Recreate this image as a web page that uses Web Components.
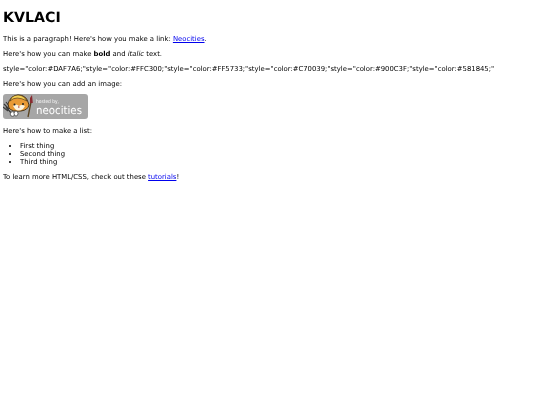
<!DOCTYPE html>
<html><head><meta charset="utf-8"><title>KVLACI</title>
<style>html,body{margin:0;padding:0;background:#fff}</style></head>
<body>
<template id="t-page"><style>
:host{display:block;padding:3px;font:6.87px/9px "DejaVu Sans",sans-serif;color:#000;text-rendering:geometricPrecision;filter:blur(.25px)}
h1{font-size:14.2px;line-height:18px;margin:6px 0 7.5px;font-weight:700}
</style><h1><slot name="title"></slot></h1><slot></slot></template>
<template id="t-p"><style>:host{display:block;margin:6px 0}</style><slot></slot></template>
<template id="t-badge"><style>:host{display:block;width:85px;height:25px;margin:-.5px 0 7.5px}svg{display:block}
text{font-family:"DejaVu Sans",sans-serif;fill:#fff}</style>
<svg width="85" height="25" viewBox="0 0 85 25">
<rect width="85" height="25" rx="3" fill="#a6a6a6"/>
<path d="M1 10 L6 15 M3 8 L7 13 M0 13 L5 17 M3 13 L9 20" stroke="#3a3a3a" stroke-width="1.200" fill="none"/>
<circle cx="9.500" cy="20" r="2.300" fill="#fff" stroke="#333" stroke-width=".7"/>
<path d="M5 10 Q7 2 15 1 Q23 1 25 8 L26 11 Q25 16 18 17 Q9 18 6 14Z" fill="#e89a35" stroke="#3d2a12" stroke-width=".9"/>
<path d="M7 7 Q13 1 24 7 L21 3 Q15 -1 9 3Z" fill="#f3cf55" stroke="#3d2a12" stroke-width=".6"/>
<path d="M10 12 Q13 9 16 12 Q19 10 22 12 L20 15 Q15 18 12 15Z" fill="#fbf4e0"/>
<circle cx="11.500" cy="10.500" r="1" fill="#222"/><circle cx="20" cy="10" r="1" fill="#222"/><circle cx="15.800" cy="13" r=".8" fill="#a33"/>
<ellipse cx="13" cy="19.500" rx="2" ry="2.500" fill="#fff" stroke="#333" stroke-width=".7"/>
<path d="M25 23 L28 8" stroke="#5a4320" stroke-width="1.300"/><path d="M27 9 L27 4 L29 1 L29.800 9Z" fill="#8a2a30"/>
<text x="33" y="8.500" font-size="5" textLength="23" lengthAdjust="spacingAndGlyphs">hosted by,</text>
<text x="33" y="20" font-size="11" textLength="46" lengthAdjust="spacingAndGlyphs">neocities</text></svg></template>
<template id="t-list"><style>:host{display:block;margin:6.4px 0 7.2px;padding-left:17px}ul{margin:0;padding:0}</style><ul><slot></slot></ul></template>
<template id="t-item"><style>:host{display:list-item;list-style:disc;height:8px;line-height:8px}</style><slot></slot></template>
<style>a{color:#00e}</style>
<kv-page>
<span slot="title">KVLACI</span>
<kv-p>This is a paragraph! Here's how you make a link: <a href="#">Neocities</a>.</kv-p>
<kv-p>Here's how you can make <b>bold</b> and <i>italic</i> text.</kv-p>
<kv-p>style="color:#DAF7A6;"style="color:#FFC300;"style="color:#FF5733;"style="color:#C70039;"style="color:#900C3F;"style="color:#581845;"</kv-p>
<kv-p>Here's how you can add an image:</kv-p>
<kv-badge></kv-badge>
<kv-p>Here's how to make a list:</kv-p>
<kv-list><kv-item>First thing</kv-item><kv-item>Second thing</kv-item><kv-item>Third thing</kv-item></kv-list>
<kv-p>To learn more HTML/CSS, check out these <a href="#">tutorials</a>!</kv-p>
</kv-page>
<script>
for(const [n,t] of [['kv-page','t-page'],['kv-p','t-p'],['kv-badge','t-badge'],['kv-list','t-list'],['kv-item','t-item']]){
customElements.define(n,class extends HTMLElement{constructor(){super();this.attachShadow({mode:'open'}).appendChild(document.getElementById(t).content.cloneNode(true));}});
}
</script>
</body></html>
